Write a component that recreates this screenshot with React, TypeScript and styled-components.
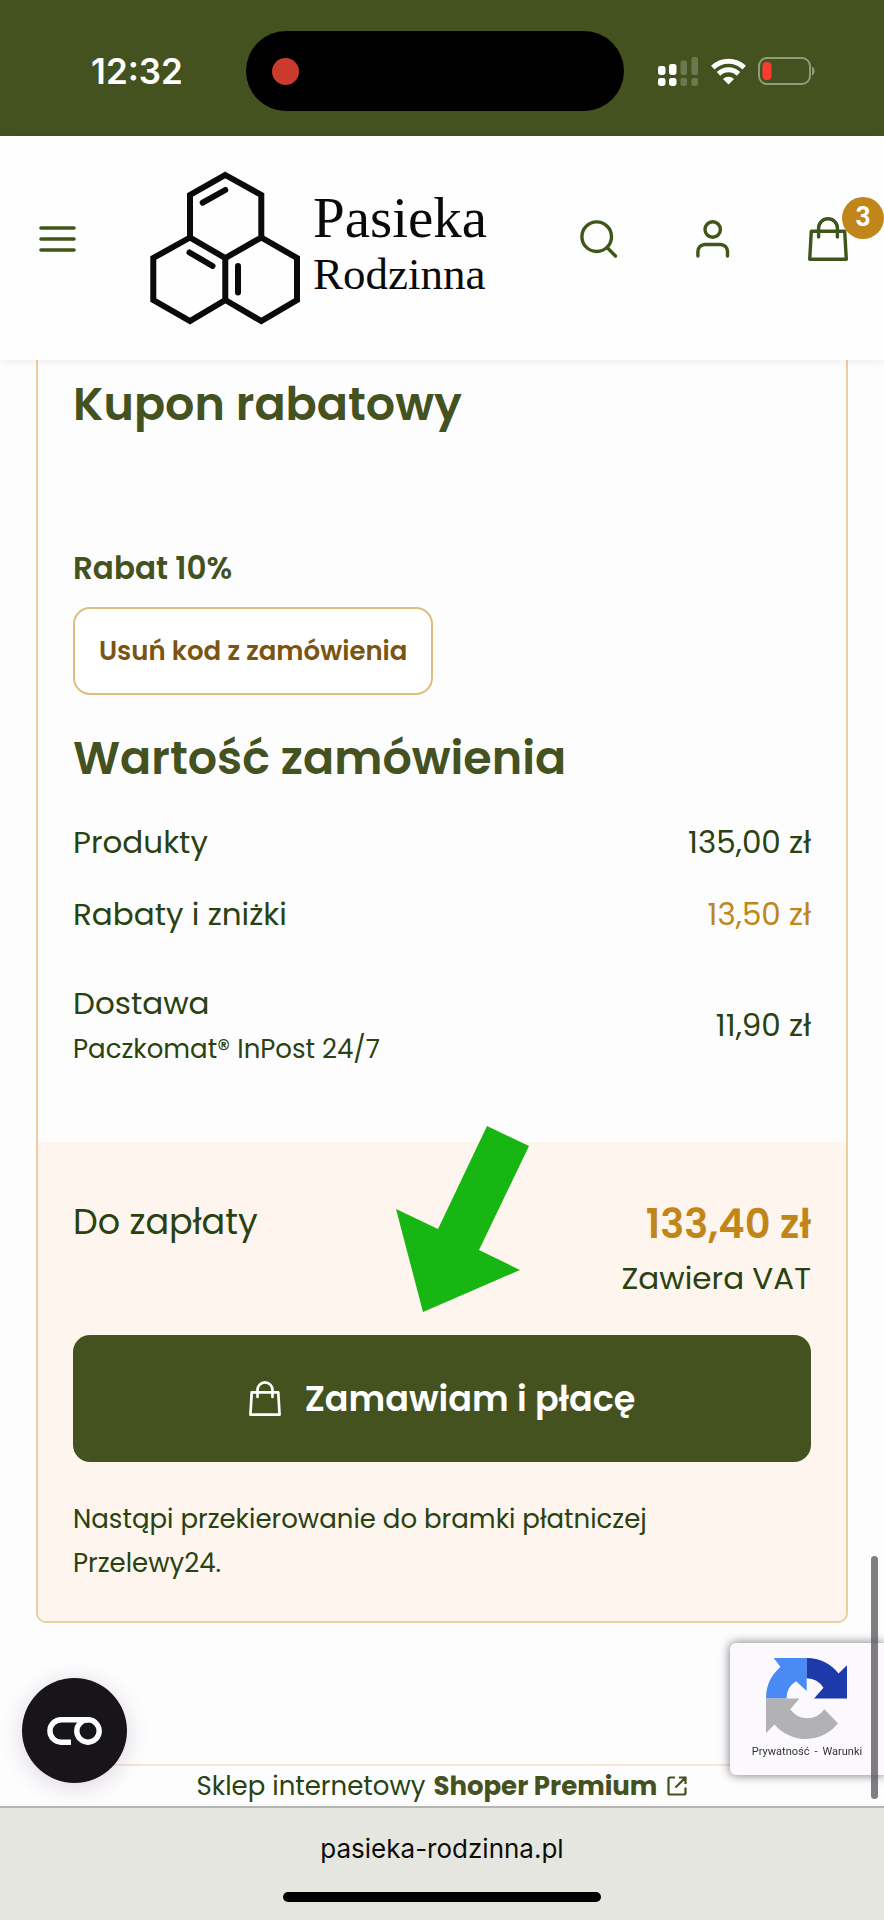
import React from "react";
import styled, { createGlobalStyle } from "styled-components";

const colors = {
  olive: "#43521f",
  text: "#294210",
  gold: "#c0861a",
  goldLine: "#ebcf9f",
  cream: "#fdf5ee",
  page: "#fefdfe",
};

const GlobalStyle = createGlobalStyle`
  * { box-sizing: border-box; }
  body {
    margin: 0;
    background: ${colors.page};
    color: ${colors.text};
    font-family: Poppins, Inter, sans-serif;
  }
  h2, p, dl, dd, dt { margin: 0; font-weight: 400; }
  button { font-family: inherit; cursor: pointer; }
  a { color: inherit; text-decoration: none; }
  svg { display: block; flex: none; }
`;

const Page = styled.div`
  display: flex;
  flex-direction: column;
  min-height: 100vh;
`;

const StatusBar = styled.div`
  display: grid;
  grid-template-columns: 246fr 378fr 260fr;
  align-items: center;
  height: 136px;
  padding-top: 6px;
  background: ${colors.olive};
  color: #fff;
`;

const Clock = styled.time`
  padding-left: 28px;
  text-align: center;
  font-family: Inter, sans-serif;
  font-size: 35px;
  font-weight: 600;
  line-height: 40px;
`;

const Island = styled.div`
  display: flex;
  align-items: center;
  height: 80px;
  padding-left: 26px;
  border-radius: 40px;
  background: #000;
`;

const RecordDot = styled.span`
  width: 27px;
  height: 27px;
  border-radius: 50%;
  background: #cb3b2d;
`;

const StatusIcons = styled.div`
  display: flex;
  align-items: center;
  justify-content: center;
  gap: 12px;
  padding-right: 36px;
`;

const Header = styled.header`
  position: relative;
  display: flex;
  align-items: flex-start;
  height: 224px;
  padding: 35px 36px 0 38px;
  background: #fefefe;
  box-shadow: 0 2px 8px rgba(60, 50, 70, 0.08);
`;

const HeaderTools = styled.nav`
  display: flex;
  align-items: center;
  gap: 78px;
  height: 136px;
`;

const Actions = styled(HeaderTools)`
  margin-left: auto;
`;

const IconButton = styled.button`
  position: relative;
  display: flex;
  padding: 0;
  border: 0;
  background: none;
  color: #40551a;
`;

const Logo = styled.a`
  display: flex;
  align-items: center;
  gap: 13px;
  margin-left: 72px;
  color: #0a0a0a;
`;

const LogoText = styled.span`
  display: flex;
  flex-direction: column;
  padding-bottom: 4px;
  font-family: "Liberation Serif", serif;
`;

const LogoLine = styled.span<{ $size: number }>`
  font-size: ${(p) => p.$size}px;
  line-height: 56px;
`;

const CartBadge = styled.span`
  position: absolute;
  top: -20px;
  right: -36px;
  width: 42px;
  height: 42px;
  border-radius: 50%;
  background: ${colors.gold};
  color: #fff;
  font-size: 26px;
  font-weight: 600;
  line-height: 40px;
  text-align: center;
`;

const Card = styled.main`
  margin: 0 36px;
  border: 2px solid ${colors.goldLine};
  border-top: 0;
  border-radius: 0 0 10px 10px;
`;

const Details = styled.section`
  padding: 12px 35px 71px;
`;

const Heading = styled.h2`
  color: ${colors.olive};
  font-size: 46px;
  font-weight: 600;
  line-height: 64px;
`;

const CouponName = styled.p`
  margin-top: 110px;
  color: ${colors.olive};
  font-size: 31px;
  font-weight: 600;
  line-height: 44px;
`;

const RemoveButton = styled.button`
  display: block;
  height: 88px;
  margin: 17px 0 31px;
  padding: 0 24px;
  border: 2px solid #dfbd80;
  border-radius: 17px;
  background: #fff;
  color: #7c5410;
  font-size: 26px;
  font-weight: 600;
`;

const Rows = styled.dl`
  display: flex;
  flex-direction: column;
  gap: 24px;
  padding-top: 28px;
`;

const Row = styled.div<{ $spaced?: boolean }>`
  display: flex;
  align-items: center;
  justify-content: space-between;
  padding-top: ${(p) => (p.$spaced ? 17 : 0)}px;
  font-size: 31px;
  line-height: 48px;
`;

const Amount = styled.dd<{ $gold?: boolean }>`
  color: ${(p) => (p.$gold ? colors.gold : colors.text)};
`;

const Carrier = styled.small`
  display: block;
  font-size: 26px;
  line-height: 44px;
`;

const Total = styled.section`
  position: relative;
  padding: 56px 35px 36px;
  border-radius: 0 0 8px 8px;
  background: ${colors.cream};
`;

const TotalRow = styled.div`
  display: flex;
  justify-content: space-between;
  font-size: 35px;
  line-height: 48px;
`;

const TotalAmount = styled.div`
  display: flex;
  flex-direction: column;
  gap: 4px;
  text-align: right;
  font-size: 31px;
`;

const TotalPrice = styled.strong`
  color: ${colors.gold};
  font-size: 40px;
  font-weight: 600;
  line-height: 52px;
`;

const Pointer = styled.svg`
  position: absolute;
  top: -16px;
  left: 358px;
`;

const PayButton = styled.button`
  display: flex;
  align-items: center;
  justify-content: center;
  gap: 24px;
  width: 100%;
  height: 127px;
  margin: 33px 0 35px;
  padding-bottom: 2px;
  border: 0;
  border-radius: 17px;
  background: ${colors.olive};
  color: #fff;
  font-size: 35px;
  font-weight: 600;
`;

const Note = styled.p`
  max-width: 640px;
  font-size: 26px;
  line-height: 44px;
`;

const Footer = styled.footer`
  display: flex;
  align-items: center;
  justify-content: center;
  gap: 8px;
  margin: 141px 36px 0;
  border-top: 2px solid #f8e5d8;
  font-size: 26px;
  line-height: 40px;
`;

const FooterLink = styled.a`
  display: flex;
  align-items: center;
  gap: 10px;
  color: ${colors.olive};
  font-weight: 700;
`;

const BrowserBar = styled.div`
  display: flex;
  flex-direction: column;
  align-items: center;
  gap: 23px;
  padding: 21px 0 18px;
  border-top: 2px solid #b5b5b3;
  background: #e5e6e0;
  color: #0c0c0c;
`;

const Address = styled.span`
  font-family: Inter, sans-serif;
  font-size: 26px;
  line-height: 40px;
`;

const HomeIndicator = styled.span`
  width: 36%;
  height: 10px;
  border-radius: 5px;
  background: #000;
`;

const ConsentButton = styled.button`
  position: fixed;
  bottom: 137px;
  left: 22px;
  display: flex;
  align-items: center;
  justify-content: center;
  width: 105px;
  height: 105px;
  border: 0;
  border-radius: 50%;
  background: #17151a;
  box-shadow: 0 4px 24px rgba(40, 20, 60, 0.16);
`;

const Captcha = styled.aside`
  position: fixed;
  right: 0;
  bottom: 145px;
  display: flex;
  flex-direction: column;
  align-items: center;
  gap: 3px;
  width: 154px;
  height: 132px;
  padding-top: 15px;
  border-radius: 6px 0 0 6px;
  background: #fbf9fd;
  box-shadow: 0 0 10px 1px rgba(60, 60, 65, 0.6);
`;

const CaptchaLinks = styled.span`
  display: flex;
  gap: 5px;
  color: #333;
  font-family: Roboto, sans-serif;
  font-size: 11px;
  line-height: 16px;
`;

const ScrollThumb = styled.span`
  position: fixed;
  right: 6px;
  bottom: 121px;
  width: 7px;
  height: 243px;
  border-radius: 4px;
  background: rgba(88, 86, 92, 0.76);
`;

const BagIcon = ({ width }: { width: number }) => (
  <svg width={width} height={Math.round(width * 1.1)} viewBox="0 0 40 44" fill="none" stroke="currentColor" strokeWidth="3.400" strokeLinecap="round" strokeLinejoin="round">
    <path d="M3.300 14.300H36.700L38.300 42.300H1.700Z" />
    <path d="M10.600 20V11.200a9.400 9.400 0 0 1 18.800 0V20" />
  </svg>
);

const summary = [
  { label: "Produkty", value: "135,00 zł" },
  { label: "Rabaty i zniżki", value: "13,50 zł", gold: true },
  { label: "Dostawa", value: "11,90 zł", carrier: "Paczkomat® InPost 24/7" },
];

export default function App() {
  return (
    <Page>
      <GlobalStyle />
      <StatusBar>
        <Clock>12:32</Clock>
        <Island>
          <RecordDot />
        </Island>
        <StatusIcons>
          <svg width="41" height="29" viewBox="0 0 41 29" fill="#fff">
            <rect x="0" y="9" width="7.500" height="9" rx="2.400" />
            <rect x="11" y="7" width="7.500" height="11" rx="2.400" />
            <rect x="0" y="21" width="7.500" height="8" rx="2.400" />
            <rect x="11" y="21" width="7.500" height="8" rx="2.400" />
            <g opacity="0.22">
              <rect x="22.500" y="3.500" width="6.500" height="14.500" rx="2" />
              <rect x="33.500" y="0" width="6.500" height="18" rx="2" />
              <rect x="22.500" y="21" width="6.500" height="8" rx="2" />
              <rect x="33.500" y="21" width="6.500" height="8" rx="2" />
            </g>
          </svg>
          <svg width="35" height="27" viewBox="0 0 35 27" fill="none" stroke="#fff" strokeWidth="5">
            <path d="M1.800 9.600A22.500 22.500 0 0 1 33.200 9.600" />
            <path d="M7.500 15.900A14.300 14.300 0 0 1 27.500 15.900" />
            <path d="M17.500 26.500L12 20.900A8 8 0 0 1 23 20.900Z" fill="#fff" stroke="none" />
          </svg>
          <svg width="57" height="28" viewBox="0 0 57 28" fill="none">
            <rect x="1" y="1" width="51" height="26" rx="8" stroke="#fff" strokeOpacity="0.42" strokeWidth="2" />
            <path d="M54 9.500C57.500 11 57.500 17 54 18.500Z" fill="#fff" fillOpacity="0.42" />
            <rect x="4.500" y="5" width="9" height="18" rx="4" fill="#fb3b30" />
          </svg>
        </StatusIcons>
      </StatusBar>

      <Header>
        <HeaderTools>
          <IconButton aria-label="Menu">
            <svg width="40" height="30" viewBox="0 0 40 30" fill="none" stroke="currentColor" strokeWidth="3.600" strokeLinecap="round">
              <path d="M3 4H36M3 15H36M3 26H36" />
            </svg>
          </IconButton>
        </HeaderTools>
        <Logo href="#">
          <svg width="150" height="154" viewBox="0 0 150 154" fill="none" stroke="currentColor" strokeWidth="6">
            <path d="M75.300 4L111.300 24V66.500L75.300 87L40 66.500V24Z" />
            <path d="M40 66.500L3.300 87V129L40 150L75.300 129V87" />
            <path d="M111.300 66.500L147 87V129L111.300 150L75.300 129" />
            <path d="M52.700 31.700L75.300 19M39.500 81.500L62.500 95M88 95V121.500" strokeLinecap="round" />
          </svg>
          <LogoText>
            <LogoLine $size={57}>Pasieka</LogoLine>
            <LogoLine $size={45}>Rodzinna</LogoLine>
          </LogoText>
        </Logo>
        <Actions>
          <IconButton aria-label="Szukaj">
            <svg width="38" height="38" viewBox="0 0 38 38" fill="none" stroke="currentColor" strokeWidth="3.400" strokeLinecap="round">
              <circle cx="16.700" cy="16.700" r="14.800" />
              <path d="M27.500 28L35.500 36" />
            </svg>
          </IconButton>
          <IconButton aria-label="Konto">
            <svg width="34" height="38" viewBox="0 0 34 38" fill="none" stroke="currentColor" strokeWidth="3.400" strokeLinecap="round">
              <circle cx="16.700" cy="9.500" r="7.700" />
              <path d="M1.900 36V31.500a7 7 0 0 1 7-7H24.500a7 7 0 0 1 7 7V36" />
            </svg>
          </IconButton>
          <IconButton aria-label="Koszyk">
            <BagIcon width={40} />
            <CartBadge>3</CartBadge>
          </IconButton>
        </Actions>
      </Header>

      <Card>
        <Details>
          <Heading>Kupon rabatowy</Heading>
          <CouponName>Rabat 10%</CouponName>
          <RemoveButton>Usuń kod z zamówienia</RemoveButton>
          <Heading>Wartość zamówienia</Heading>
          <Rows>
            {summary.map((row) => (
              <Row key={row.label} $spaced={Boolean(row.carrier)}>
                <dt>
                  {row.label}
                  {row.carrier && <Carrier>{row.carrier}</Carrier>}
                </dt>
                <Amount $gold={row.gold}>{row.value}</Amount>
              </Row>
            ))}
          </Rows>
        </Details>
        <Total>
          <TotalRow>
            <span>Do zapłaty</span>
            <TotalAmount>
              <TotalPrice>133,40 zł</TotalPrice>
              <span>Zawiera VAT</span>
            </TotalAmount>
          </TotalRow>
          <PayButton>
            <BagIcon width={32} />
            Zamawiam i płacę
          </PayButton>
          <Note>Nastąpi przekierowanie do bramki płatniczej Przelewy24.</Note>
          <Pointer width="134" height="187" viewBox="0 0 134 187" fill="#17b612">
            <path d="M91 0L133 20L83 124L124 144L27 186L0 83L42 103Z" />
          </Pointer>
        </Total>
      </Card>

      <Footer>
        <span>Sklep internetowy</span>
        <FooterLink href="#">
          Shoper Premium
          <svg width="20" height="20" viewBox="0 0 20 20" fill="none" stroke="currentColor" strokeWidth="2.200">
            <path d="M8 1.500H3Q1.500 1.500 1.500 3V17Q1.500 18.500 3 18.500H17Q18.500 18.500 18.500 17V11.500M12 1.500H18.500V8M18.300 1.700L8.500 11.500" />
          </svg>
        </FooterLink>
      </Footer>

      <BrowserBar>
        <Address>pasieka-rodzinna.pl</Address>
        <HomeIndicator />
      </BrowserBar>

      <ConsentButton aria-label="Ustawienia plików cookie">
        <svg width="55" height="28" viewBox="0 0 55 28" fill="none" stroke="#fff" strokeWidth="5.400">
          <path d="M24 25.200H14.200A11.200 11.200 0 0 1 14.200 2.700H41" />
          <circle cx="41" cy="14" r="11.200" />
        </svg>
      </ConsentButton>
      <Captcha>
        <svg width="82" height="83" viewBox="0 0 82 83">
          <path fill="#4a8af4" d="M7.700 0H40.700V33L30 23.300A20.500 20.500 0 0 0 20.500 40.500H0A41 41 0 0 1 14.500 9Z" />
          <path fill="#1c3aa9" d="M40.700 0A41 41 0 0 1 72.500 15.500L81 7.300V40.500H48L57.500 29.700A20.500 20.500 0 0 0 40.700 20.200Z" />
          <path fill="#b2b2b4" d="M0 40.500H33.500L24.300 51.300A20.500 20.500 0 0 0 58.300 51.300L72 65.300A41 41 0 0 1 8.500 66.500L0 75Z" />
        </svg>
        <CaptchaLinks>
          <a href="#">Prywatność</a>
          <span>-</span>
          <a href="#">Warunki</a>
        </CaptchaLinks>
      </Captcha>
      <ScrollThumb />
    </Page>
  );
}
